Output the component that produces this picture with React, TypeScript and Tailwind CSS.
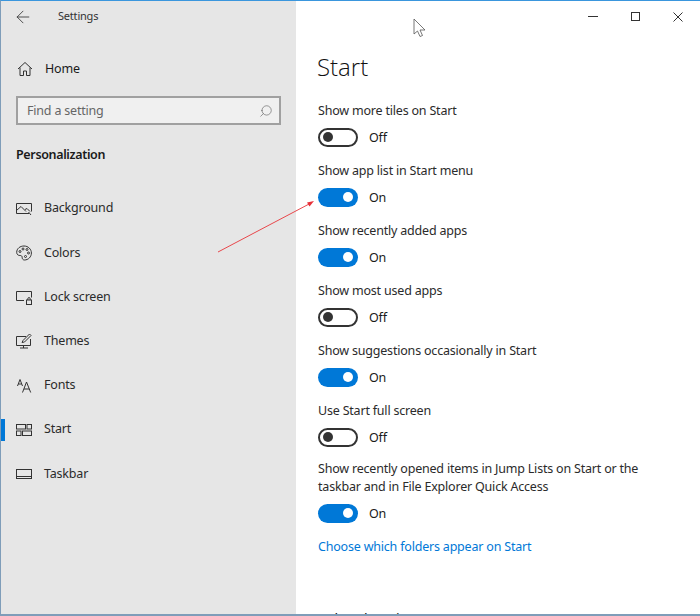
import React from 'react';
import { ArrowLeft, Search } from 'lucide-react';

const navItems = [
  { label: 'Background', icon: 'background' },
  { label: 'Colors', icon: 'colors' },
  { label: 'Lock screen', icon: 'lock' },
  { label: 'Themes', icon: 'themes' },
  { label: 'Fonts', icon: 'fonts' },
  { label: 'Start', icon: 'start', active: true },
  { label: 'Taskbar', icon: 'taskbar' },
];

const toggles = [
  { label: 'Show more tiles on Start', on: false },
  { label: 'Show app list in Start menu', on: true },
  { label: 'Show recently added apps', on: true },
  { label: 'Show most used apps', on: false },
  { label: 'Show suggestions occasionally in Start', on: true },
  { label: 'Use Start full screen', on: false },
];

function NavIcon({ name }: { name: string }) {
  const common = {
    width: 16,
    height: 16,
    viewBox: '0 0 16 16',
    fill: 'none',
    stroke: '#333',
    strokeWidth: 1,
  };
  if (name === 'background')
    return (
      <svg {...common}>
        <path d="M13 12.500H.5v-10h15v8" />
        <path d="M1 9l4-3.500 5 5M9 8.500l2-1 3 3" />
        <path d="M12.500 11l2.500 3" />
      </svg>
    );
  if (name === 'colors')
    return (
      <svg {...common}>
        <path d="M8 1C4 1 .7 3.600.7 7.300c0 2.400 1.700 3.200 3.200 3.200 1.300 0 2.200.4 2.200 1.700 0 1.500.8 2.800 2.300 2.800 4 0 7-3.200 7-7S12.200 1 8 1z" />
        <circle cx="4" cy="6.500" r="1" />
        <circle cx="7" cy="4" r="1" />
        <circle cx="11" cy="4.500" r="1" />
        <circle cx="12.500" cy="8" r="1" />
        <circle cx="9.500" cy="11.500" r="1" />
      </svg>
    );
  if (name === 'lock')
    return (
      <svg {...common}>
        <path d="M8 11.500H.5v-9h15v6" />
        <rect x="10.500" y="11" width="5" height="4.500" />
        <path d="M11.800 11V9.800a1.200 1.200 0 0 1 2.400 0V11" />
      </svg>
    );
  if (name === 'themes')
    return (
      <svg {...common}>
        <path d="M10 3.500H.5v9h14V6" />
        <path d="M7.500 12.500v2.500M4 15h8" />
        <path d="M6 9.500l1-2L13.500 1l1.500 1.500L8.500 9z" />
      </svg>
    );
  if (name === 'fonts')
    return (
      <svg {...common}>
        <path d="M1.500 8L4 1.500 6.500 8M2.300 6h3.400" />
        <path d="M6.500 14.500L10.500 4l4.200 10.500M8 11h5.200" />
      </svg>
    );
  if (name === 'start')
    return (
      <svg {...common}>
        <rect x="0.500" y="2.500" width="9" height="4.500" />
        <rect x="11" y="2.500" width="4.500" height="4.500" />
        <rect x="0.500" y="9" width="4.500" height="4.500" />
        <rect x="6.500" y="9" width="9" height="4.500" />
      </svg>
    );
  return (
    <svg {...common}>
      <rect x="0.500" y="3.500" width="15" height="9" />
      <path d="M.5 10.500h15" />
    </svg>
  );
}

function Toggle({ on }: { on: boolean }) {
  return (
    <div className="flex items-center gap-[11px] h-5">
      <div
        className={
          on
            ? 'w-10 h-[19px] rounded-full bg-[#0078d7] flex items-center justify-end px-[5px]'
            : 'w-10 h-[19px] rounded-full border-2 border-[#333] flex items-center justify-start px-[3px]'
        }
      >
        <div className={on ? 'w-2.5 h-2.5 rounded-full bg-white' : 'w-2.5 h-2.5 rounded-full bg-[#333]'} />
      </div>
      <span className="text-[12.5px] tracking-[-0.2px] text-[#1a1a1a] pt-[2px]">{on ? 'On' : 'Off'}</span>
    </div>
  );
}

export default function App() {
  return (
    <div className="relative w-[700px] h-[616px] overflow-hidden flex bg-white font-['Noto_Sans','Open_Sans',sans-serif] border-t border-[#3a96dd] border-l border-l-[#7f9db9] border-b-2 border-b-[#7f9db9]">
      {/* Sidebar */}
      <aside className="w-[295px] shrink-0 bg-[#e6e6e6] flex flex-col">
        <div className="h-[31px] flex items-center pl-[12px] gap-[25px]">
          <ArrowLeft size={20} strokeWidth={1} className="text-[#333]" />
          <span className="text-[11px] tracking-[-0.2px] text-[#333]">Settings</span>
        </div>
        <div className="h-[44px] mt-[15px] flex items-center pl-[16px] gap-[12px]">
          <svg width="16" height="16" viewBox="0 0 16 16" fill="none" stroke="#333" strokeWidth="1">
            <path d="M1 8l7-6.500L15 8M3 6.500v8h3.500V10h3v4.500H13v-8" />
          </svg>
          <span className="text-[12.5px] tracking-[-0.2px] text-[#1a1a1a]">Home</span>
        </div>
        <div className="mx-[15px] mt-[5px] h-[29px] border-2 border-[#a0a0a0] bg-[#f0f0f0] flex items-center justify-between pl-[9px] pr-[6px]">
          <span className="text-[12.5px] tracking-[-0.2px] text-[#666] pt-[1px]">Find a setting</span>
          <Search size={14} strokeWidth={1} className="text-[#555] -scale-x-100" />
        </div>
        <div className="pl-[15px] mt-[21px] text-[12.5px] tracking-[-0.35px] font-semibold text-[#1a1a1a]">Personalization</div>
        <nav className="mt-[22px] flex flex-col">
          {navItems.map((item) => (
            <div key={item.label} className="relative h-[44.2px] flex items-center pl-[15px] gap-[12px]">
              {item.active && <div className="absolute left-0 top-[11px] w-1 h-[22px] bg-[#0078d7]" />}
              <NavIcon name={item.icon} />
              <span className="text-[12.5px] tracking-[-0.2px] text-[#2b2b2b]">{item.label}</span>
            </div>
          ))}
        </nav>
      </aside>

      {/* Main */}
      <main className="flex-1 pl-[22px] flex flex-col relative">
        <div className="absolute right-[1px] top-0 h-[31px] flex items-center">
          <div className="w-[43px] flex justify-center">
            <div className="w-[10px] h-px bg-[#333]" />
          </div>
          <div className="w-[43px] flex justify-center">
            <div className="w-[9px] h-[9px] border border-[#333]" />
          </div>
          <div className="w-[42px] flex justify-center">
            <svg width="10" height="10" viewBox="0 0 10 10" stroke="#333" strokeWidth="1">
              <path d="M.5.5l9 9M9.500.5l-9 9" />
            </svg>
          </div>
        </div>
        <h1 className="mt-[47px] -ml-px h-[38px] text-[24px] leading-[38px] font-light text-[#111] font-['Open_Sans',sans-serif]">Start</h1>
        <div className="mt-[15px] flex flex-col gap-[14px]">
          {toggles.map((t) => (
            <div key={t.label} className="flex flex-col gap-[7px]">
              <div className="text-[12.5px] tracking-[-0.2px] leading-[19px] text-[#2b2b2b] h-[19px]">{t.label}</div>
              <Toggle on={t.on} />
            </div>
          ))}
          <div className="flex flex-col gap-[7px] -mt-px">
            <div className="text-[12.5px] tracking-[-0.2px] leading-[18px] text-[#2b2b2b] w-[350px]">
              Show recently opened items in Jump Lists on Start or the taskbar and in File Explorer Quick Access
            </div>
            <Toggle on />
          </div>
        </div>
        <div className="mt-[14px] text-[12.5px] tracking-[-0.2px] leading-[19px] text-[#0078d7]">Choose which folders appear on Start</div>
        <div className="mt-[52px] text-[14px] leading-[22px] text-[#111]">Related settings</div>
      </main>

      {/* Annotation arrow */}
      <svg className="absolute left-[216px] top-[199px]" width="100" height="56" viewBox="0 0 100 56" fill="none">
        <path d="M1 52L94 3" stroke="#e8474b" strokeWidth="1" />
        <path d="M97 1l-7 1.500 2.500 4z" fill="#e8313a" />
      </svg>

      {/* Mouse pointer */}
      <svg className="absolute left-[412px] top-[17px]" width="14" height="20" viewBox="0 0 14 20" fill="white" stroke="#555" strokeWidth="0.8">
        <path d="M1 1v15l3.500-3 2.500 5.500 2.500-1L7 12h5z" />
      </svg>
    </div>
  );
}
